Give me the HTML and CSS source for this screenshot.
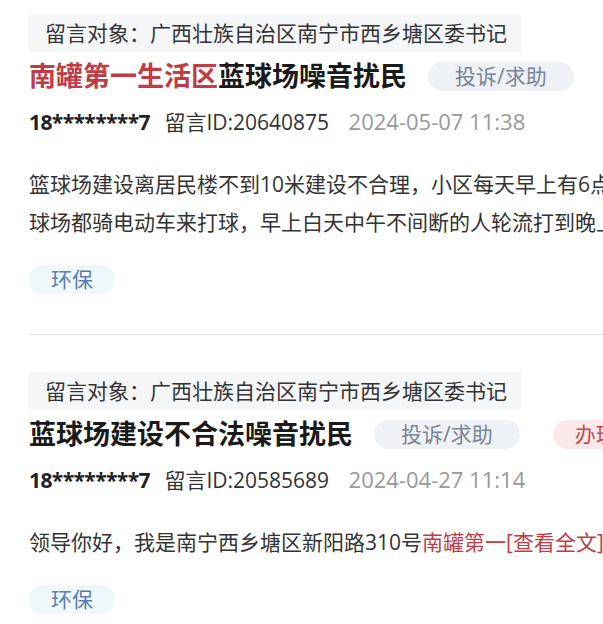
FILE: index.html
```html
<!DOCTYPE html>
<html lang="zh-CN">
<head>
<meta charset="utf-8">
<title>留言列表</title>
<link rel="stylesheet" href="styles.css">
</head>
<body>
<div class="list">
  <div class="item">
    <div class="target">留言对象：广西壮族自治区南宁市西乡塘区委书记</div>
    <div class="title-row">
      <h2 class="title"><span class="hl">南罐第一生活区</span>蓝球场噪音扰民</h2>
      <span class="pill pill-type">投诉/求助</span>
    </div>
    <div class="meta">
      <span class="user">18********7</span>
      <span class="mid">留言ID:20640875</span>
      <span class="date">2024-05-07 11:38</span>
    </div>
    <p class="body">篮球场建设离居民楼不到10米建设不合理，小区每天早上有6点多就有人来打篮球场都骑电动车来打球，早上白天中午不间断的人轮流打到晚上十点多，严重影响居民休息。</p>
    <span class="cat">环保</span>
  </div>
  <div class="item">
    <div class="target">留言对象：广西壮族自治区南宁市西乡塘区委书记</div>
    <div class="title-row">
      <h2 class="title">蓝球场建设不合法噪音扰民</h2>
      <span class="pill pill-type">投诉/求助</span>
      <span class="pill pill-state">办理中</span>
    </div>
    <div class="meta">
      <span class="user">18********7</span>
      <span class="mid">留言ID:20585689</span>
      <span class="date">2024-04-27 11:14</span>
    </div>
    <p class="body">领导你好，我是南宁西乡塘区新阳路310号<span class="hl">南罐第一</span><a class="more">[查看全文]</a></p>
    <span class="cat">环保</span>
  </div>
</div>
</body>
</html>
```
FILE: styles.css
```css
html, body {
  margin: 0;
  padding: 0;
  overflow: hidden;
  background: #fff;
}
body {
  font-family: "Open Sans", "Noto Sans CJK SC", sans-serif;
  color: #333;
}
.list {
  width: 740px;
  padding: 14px 0 0 29px;
}
.item {
  border-bottom: 1px solid #e8e8e8;
  padding-bottom: 40px;
  margin-bottom: 37px;
}
.target {
  display: inline-block;
  height: 38px;
  line-height: 38px;
  padding: 0 14px 0 16px;
  background: #f5f6f8;
  font-size: 21px;
  color: #333;
  border-radius: 3px;
}
.title-row {
  display: flex;
  align-items: center;
  height: 40px;
  margin-top: 4px;
  white-space: nowrap;
}
.title {
  margin: 0;
  font-size: 27px;
  font-weight: 700;
  color: #1a1a1a;
  line-height: 40px;
}
.hl {
  color: #c13c44;
}
.pill {
  display: inline-block;
  height: 29px;
  line-height: 29px;
  border-radius: 15px;
  font-size: 21px;
}
.pill-type {
  margin-left: 21px;
  padding: 0 27px;
  background: #eef1f5;
  color: #7b8494;
}
.pill-state {
  margin-left: 33px;
  padding: 0 22px;
  background: #fbe9ea;
  color: #c9474f;
}
.meta {
  margin-top: 10px;
  height: 30px;
  line-height: 30px;
  font-size: 21px;
  white-space: nowrap;
}
.user {
  font-weight: 700;
  color: #222;
  letter-spacing: -0.6px;
}
.mid {
  margin-left: 9px;
  color: #333;
}
.date {
  margin-left: 14px;
  font-size: 22px;
  color: #999;
}
.body {
  margin: 29px 0 0;
  font-size: 21px;
  line-height: 38px;
  color: #333;
  display: -webkit-box;
  -webkit-box-orient: vertical;
  -webkit-line-clamp: 2;
  overflow: hidden;
}
.more {
  color: #c13c44;
}
.cat {
  display: inline-block;
  margin-top: 24px;
  height: 29px;
  line-height: 29px;
  padding: 0 22px;
  border-radius: 15px;
  background: #eef8f9;
  color: #5b7db1;
  font-size: 21px;
}
```
